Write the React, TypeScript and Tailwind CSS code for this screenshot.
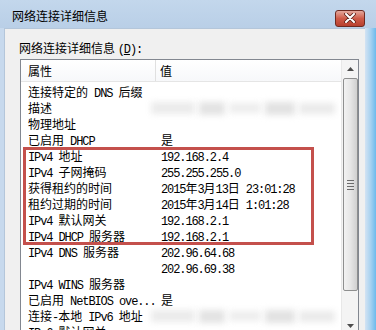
import React from 'react';

type Row = { name: string; value?: string; blur?: boolean };

const rows: Row[] = [
  { name: '连接特定的 DNS 后缀' },
  { name: '描述', blur: true },
  { name: '物理地址' },
  { name: '已启用 DHCP', value: '是' },
  { name: 'IPv4 地址', value: '192.168.2.4' },
  { name: 'IPv4 子网掩码', value: '255.255.255.0' },
  { name: '获得租约的时间', value: '2015年3月13日 23:01:28' },
  { name: '租约过期的时间', value: '2015年3月14日 1:01:28' },
  { name: 'IPv4 默认网关', value: '192.168.2.1' },
  { name: 'IPv4 DHCP 服务器', value: '192.168.2.1' },
  { name: 'IPv4 DNS 服务器', value: '202.96.64.68' },
  { name: '', value: '202.96.69.38' },
  { name: 'IPv4 WINS 服务器' },
  { name: '已启用 NetBIOS ove...', value: '是' },
  { name: '连接-本地 IPv6 地址', blur: true },
  { name: 'IPv6 默认网关' },
];

// Latin runs look like SimSun's half-width glyphs: narrow mono
const Txt = ({ s }: { s: string }) => {
  const parts = s.split(/([\x20-\x7e]+)/);
  return (
    <>
      {parts.map((p, i) =>
        i % 2 === 1 ? (
          <span key={i} className="font-['Liberation_Mono',monospace] text-[12px] tracking-[-1.1px] whitespace-pre">
            {p}
          </span>
        ) : (
          <span key={i}>{p}</span>
        )
      )}
    </>
  );
};

const Smudge = () => (
  <div className="flex items-center gap-[4px] h-[16px] -ml-[10px]">
    <div className="w-[44px] h-[12px] bg-[#ebebeb] blur-[3px]" />
    <div className="w-[26px] h-[13px] bg-[#e3e3e3] blur-[3px]" />
    <div className="w-[32px] h-[10px] bg-[#ededed] blur-[3px]" />
    <div className="w-[30px] h-[13px] bg-[#e2e2e2] blur-[3px]" />
    <div className="w-[36px] h-[11px] bg-[#eaeaea] blur-[3px]" />
  </div>
);

const Arrow = ({ up }: { up?: boolean }) => (
  <svg width="7" height="4" viewBox="0 0 7 4">
    <path d={up ? 'M0 4 L3.5 0 L7 4 Z' : 'M0 0 L3.5 4 L7 0 Z'} fill="#4d4d4d" />
  </svg>
);

export default function App() {
  return (
    <div className="w-[376px] h-[330px] overflow-hidden flex flex-col bg-gradient-to-r from-[#d6e4f2] to-[#bcd3ea] font-['Noto_Sans_CJK_SC',sans-serif] text-[12px] text-black">
      {/* title bar */}
      <div className="h-[28px] shrink-0 flex items-center justify-between pl-[12px] pr-[11px] bg-gradient-to-b from-[#c3d7ec] to-[#b9cfe7]">
        <span className="leading-[16px] pt-[4px]">网络连接详细信息</span>
        <div className="mt-[8px] w-[30px] h-[17px] rounded-[3px] border border-[#6e2a20] bg-gradient-to-b from-[#e3a89d] via-[#cf5b48] to-[#b8402e] flex items-center justify-center">
          <svg width="12" height="10" viewBox="0 0 12 10">
            <path d="M2 1 L10 9 M10 1 L2 9" stroke="#5a2018" strokeWidth="3.6" strokeLinecap="round" />
            <path d="M2 1 L10 9 M10 1 L2 9" stroke="#ffffff" strokeWidth="2" strokeLinecap="round" />
          </svg>
        </div>
      </div>

      <div className="flex-1 flex">
        <div className="w-[4px] bg-[#c7d9ed]" />
        <div className="flex-1 bg-[#f0f0f0] border-t border-l border-[#b4c6da] pl-[14px] pt-[11px] flex flex-col">
          <div className="leading-[16px] mb-[1px]">
            网络连接详细信息 <span className="font-['Liberation_Mono',monospace] text-[12px] tracking-[-1.1px]">(<u>D</u>):</span>
          </div>
          <div className="ml-[1px] w-[339px] h-[276px] border border-[#828790] bg-white flex">
            <div className="flex-1 relative">
              <div className="h-[22px] flex border-b border-[#e5e5e5] bg-gradient-to-b from-white to-[#f7f8fa]">
                <div className="w-[135px] pl-[7px] flex items-center border-r border-[#e0e0e0]">属性</div>
                <div className="pl-[4px] flex items-center">值</div>
              </div>
              <div className="pt-[2px]">
                {rows.map((r, i) => (
                  <div key={i} className="h-[16px] leading-[16px] flex">
                    <div className="w-[140px] pl-[7px] whitespace-nowrap overflow-hidden">
                      <Txt s={r.name} />
                    </div>
                    <div className="flex-1 whitespace-nowrap">
                      {r.blur ? <Smudge /> : r.value ? <Txt s={r.value} /> : null}
                    </div>
                  </div>
                ))}
              </div>
              {/* highlight box */}
              <div className="absolute left-[2px] top-[87px] w-[291px] h-[98px] border-[3px] border-[#c4504c]" />
            </div>
            {/* scrollbar */}
            <div className="w-[17px] bg-[#f4f4f4] flex flex-col items-center border-l border-[#e8e8e8]">
              <div className="h-[17px] flex items-center justify-center">
                <Arrow up />
              </div>
              <div className="mt-[1px] w-[15px] h-[213px] rounded-[2px] border border-[#8e8f8f] bg-gradient-to-r from-[#f2f2f2] via-[#e6e6e6] to-[#d0d0d0] flex flex-col items-center justify-center gap-[2px]">
                <div className="w-[7px] h-[1px] bg-[#6b6b6b]" />
                <div className="w-[7px] h-[1px] bg-[#6b6b6b]" />
                <div className="w-[7px] h-[1px] bg-[#6b6b6b]" />
                <div className="w-[7px] h-[1px] bg-[#6b6b6b]" />
              </div>
              <div className="flex-1" />
              <div className="h-[17px] flex items-center justify-center">
                <Arrow />
              </div>
            </div>
          </div>
        </div>
        <div className="w-[11px] bg-gradient-to-r from-[#d3e3f3] via-[#a8d2f0] to-[#6cbaec]" />
      </div>
    </div>
  );
}
